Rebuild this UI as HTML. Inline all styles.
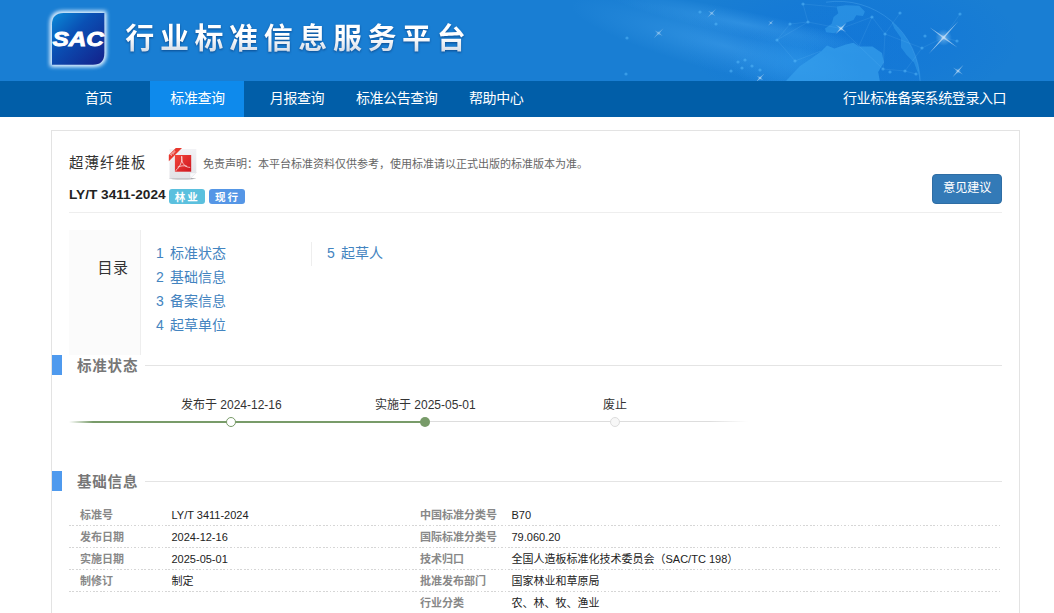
<!DOCTYPE html>
<html lang="zh-CN">
<head>
<meta charset="utf-8">
<title>行业标准信息服务平台</title>
<style>
*{box-sizing:border-box;margin:0;padding:0}
html,body{width:1054px;height:613px;overflow:hidden;background:#fff}
body{font-family:"Liberation Sans","Noto Sans CJK SC",sans-serif;font-size:12px;color:#333;position:relative}
.abs{position:absolute;white-space:nowrap}
#banner{position:absolute;left:0;top:0;width:1054px;height:81px;background:#197ed3;overflow:hidden}
#nav{position:absolute;left:0;top:81px;width:1054px;height:36px;background:#015ea8}
#nav .it{position:absolute;top:0;height:36px;line-height:35px;color:#fff;font-size:14px;letter-spacing:-.4px;text-align:center;white-space:nowrap}
#nav .act{background:#0e8aec}
#title{left:125.300px;top:18.600px;font-size:29px;line-height:40px;letter-spacing:5.600px;color:transparent;background:linear-gradient(#fff 0,#fff 45%,#cfd9e6 85%);-webkit-background-clip:text;background-clip:text;filter:drop-shadow(0 1.500px 1px rgba(0,35,90,.55));font-weight:700}
#box{position:absolute;left:51px;top:130px;width:969px;height:500px;border:1px solid #e3e3e3;background:#fff}
.lab{position:absolute;height:14.500px;line-height:14.500px;font-size:10.500px;color:#fff;border-radius:3px;text-align:center;letter-spacing:2px;text-indent:1px;font-weight:700;padding-top:.6px}
.toc{color:#4384c0;font-size:14px;line-height:20px;word-spacing:2.200px}
.sech{position:absolute;left:52px;width:10px;height:20px;background:#4f9aee}
.sect{font-size:14.500px;letter-spacing:.8px;font-weight:700;color:#777;line-height:20px}
.secl{position:absolute;height:1px;background:#e4e4e4}
.tl{font-size:12px;color:#333;line-height:16px}
.k{font-weight:700;color:#888;font-size:11px;line-height:16px}
.v{color:#222;font-size:11px;line-height:16px}
.row{position:absolute;left:69px;width:931px;height:1px;background:repeating-linear-gradient(90deg,#d6d6d6 0,#d6d6d6 1.700px,transparent 1.700px,transparent 3.430px)}
</style>
</head>
<body>
<div id="banner">
  <svg class="abs" style="left:0;top:0" width="1054" height="81" viewBox="0 0 1054 81">
    <defs>
      <radialGradient id="beam" cx="0.5" cy="0.5" r="0.5">
        <stop offset="0" stop-color="#46a4ee" stop-opacity=".5"/>
        <stop offset=".6" stop-color="#46a4ee" stop-opacity=".18"/>
        <stop offset="1" stop-color="#46a4ee" stop-opacity="0"/>
      </radialGradient>
      <radialGradient id="sg" cx="0.5" cy="0.5" r="0.5">
        <stop offset="0" stop-color="#fff" stop-opacity=".85"/>
        <stop offset=".4" stop-color="#bfe6ff" stop-opacity=".35"/>
        <stop offset="1" stop-color="#bfe6ff" stop-opacity="0"/>
      </radialGradient>
      <radialGradient id="deep" cx="0.5" cy="0.5" r="0.5"><stop offset="0" stop-color="#0c70dc" stop-opacity=".45"/><stop offset=".6" stop-color="#0c70dc" stop-opacity=".25"/><stop offset="1" stop-color="#0c70dc" stop-opacity="0"/></radialGradient>
      <radialGradient id="halo" cx="0.5" cy="0.5" r="0.5">
        <stop offset="0" stop-color="#2c97ea" stop-opacity=".55"/>
        <stop offset="1" stop-color="#2c97ea" stop-opacity="0"/>
      </radialGradient>
      <linearGradient id="gf" gradientUnits="userSpaceOnUse" x1="800" y1="0" x2="920" y2="0"><stop offset="0" stop-color="#1377d8" stop-opacity="0"/><stop offset="1" stop-color="#1377d8" stop-opacity=".4"/></linearGradient>
      <clipPath id="gc"><circle cx="838" cy="83.500" r="82.200"/></clipPath>
    </defs>
    <ellipse cx="850" cy="40" rx="170" ry="70" fill="url(#deep)"/>
    <ellipse cx="725" cy="46" rx="160" ry="27" fill="url(#beam)" transform="rotate(15 725 46)"/>
    <ellipse cx="745" cy="24" rx="140" ry="13" fill="url(#beam)" transform="rotate(12 745 24)"/>
    <ellipse cx="800" cy="60" rx="70" ry="34" fill="url(#halo)"/>
    <circle cx="838" cy="83.500" r="82.200" fill="url(#gf)"/>
    <g clip-path="url(#gc)" fill="#36a0ec">
      <path opacity=".55" d="M836.400 6.600 L845.900 5.300 L859.200 5.700 L864.900 11.400 L863 16.100 L856.300 15.200 L853.500 19.900 L845.900 22.800 L843 28.500 L834.500 33.200 L826 32.300 L825 28.500 L831.700 23.700 L833.600 17 L838.300 13.300 Z"/>
      <path opacity=".7" d="M785 82 L800 66 L810.800 58.800 L821.200 51.200 L827 45.500 L834.500 48.400 L845.900 44.600 L853.500 42.700 L859 46.500 L872.500 46.500 L882 53.100 L883.900 62.600 L878.200 72.100 L880 82 Z"/>
      <path opacity=".5" d="M891.400 20.900 A82.200 82.200 0 0 1 920.200 82 L919 76 L914 62.600 L906.600 55 L901 47.400 L901 38 L894.300 28.500 Z"/>
    </g>
    <path d="M826 2.200 A82.200 82.200 0 0 1 920.200 82" fill="none" stroke="#6fc4ff" stroke-width=".8" opacity=".3"/>
    <g stroke="#8fd4ff" stroke-width=".5" opacity=".22"><path d="M777 40 L808 22"/><path d="M808 22 L790 24"/><path d="M790 24 L777 40"/><path d="M777 40 L795 61"/><path d="M795 61 L821 51"/><path d="M808 22 L841 28.5"/><path d="M841 28.5 L872 17"/><path d="M872 17 L885 34"/><path d="M885 34 L900 13"/><path d="M885 34 L922 48"/><path d="M922 48 L905 71"/><path d="M905 71 L883 69"/><path d="M883 69 L885 34"/><path d="M922 48 L943.6 37.5"/><path d="M943.6 37.5 L960 14"/><path d="M943.6 37.5 L957 41"/><path d="M905 71 L916 74"/><path d="M872 17 L859 46"/><path d="M859 46 L883 69"/><path d="M841 28.5 L859 46"/><path d="M803 4 L808 22"/><path d="M803 4 L836 7"/></g>
    <circle cx="777" cy="40" r="1.6" fill="#5fc0ff" opacity=".45"/><circle cx="790" cy="24" r="1.6" fill="#5fc0ff" opacity=".45"/><circle cx="808" cy="22" r="1.6" fill="#5fc0ff" opacity=".45"/><circle cx="795" cy="61" r="1.6" fill="#5fc0ff" opacity=".45"/><circle cx="872" cy="17" r="1.6" fill="#5fc0ff" opacity=".45"/><circle cx="885" cy="34" r="1.6" fill="#5fc0ff" opacity=".45"/><circle cx="900" cy="13" r="1.6" fill="#5fc0ff" opacity=".45"/><circle cx="922" cy="48" r="1.6" fill="#5fc0ff" opacity=".45"/><circle cx="905" cy="71" r="1.6" fill="#5fc0ff" opacity=".45"/><circle cx="883" cy="69" r="1.6" fill="#5fc0ff" opacity=".45"/><circle cx="890" cy="72" r="1.6" fill="#5fc0ff" opacity=".45"/><circle cx="916" cy="74" r="1.6" fill="#5fc0ff" opacity=".45"/><circle cx="803" cy="4" r="1.6" fill="#5fc0ff" opacity=".45"/><circle cx="960" cy="14" r="1.6" fill="#5fc0ff" opacity=".45"/><circle cx="925" cy="36" r="1.6" fill="#5fc0ff" opacity=".45"/><circle cx="957" cy="41" r="1.6" fill="#5fc0ff" opacity=".45"/><circle cx="738" cy="62" r="1.6" fill="#5fc0ff" opacity=".45"/><circle cx="745" cy="60" r="1.6" fill="#5fc0ff" opacity=".45"/><circle cx="752" cy="66" r="1.6" fill="#5fc0ff" opacity=".45"/><circle cx="760" cy="70" r="1.6" fill="#5fc0ff" opacity=".45"/><circle cx="742" cy="68" r="1.6" fill="#5fc0ff" opacity=".45"/><circle cx="731" cy="71" r="1.6" fill="#5fc0ff" opacity=".45"/><circle cx="700" cy="12" r="1.6" fill="#5fc0ff" opacity=".45"/><circle cx="716" cy="24" r="1.6" fill="#5fc0ff" opacity=".45"/><circle cx="627" cy="38" r="1.6" fill="#5fc0ff" opacity=".45"/><circle cx="626" cy="74" r="1.6" fill="#5fc0ff" opacity=".45"/>
    <g transform="translate(943.6 37.5)" opacity="0.75"><circle r="8.4" fill="url(#sg)"/><path d="M-22 0 L0 -0.8 L22 0 L0 0.8 Z" fill="#fff" opacity=".8" transform="rotate(-48)"/><path d="M-17 0 L0 -0.8 L17 0 L0 0.8 Z" fill="#fff" opacity=".7" transform="rotate(36)"/></g>
    <g transform="translate(841 28.5)" opacity="0.75"><circle r="3.0" fill="url(#sg)"/><path d="M-8 0 L0 -0.6 L8 0 L0 0.6 Z" fill="#fff" opacity=".8" transform="rotate(-45)"/><path d="M-6 0 L0 -0.6 L6 0 L0 0.6 Z" fill="#fff" opacity=".7" transform="rotate(35)"/></g>
    <g transform="translate(958 71)" opacity="0.65"><circle r="3.0" fill="url(#sg)"/><path d="M-8 0 L0 -0.6 L8 0 L0 0.6 Z" fill="#fff" opacity=".8" transform="rotate(-48)"/><path d="M-6 0 L0 -0.6 L6 0 L0 0.6 Z" fill="#fff" opacity=".7" transform="rotate(35)"/></g>
    <g transform="translate(658.6 33.2)" opacity="0.5"><circle r="2.7" fill="url(#sg)"/><path d="M-7 0 L0 -0.55 L7 0 L0 0.55 Z" fill="#fff" opacity=".8" transform="rotate(-45)"/><path d="M-5 0 L0 -0.55 L5 0 L0 0.55 Z" fill="#fff" opacity=".7" transform="rotate(35)"/></g>
    <g transform="translate(711.7 13.3)" opacity="0.5"><circle r="2.3" fill="url(#sg)"/><path d="M-6 0 L0 -0.55 L6 0 L0 0.55 Z" fill="#fff" opacity=".8" transform="rotate(-45)"/><path d="M-4.5 0 L0 -0.55 L4.5 0 L0 0.55 Z" fill="#fff" opacity=".7" transform="rotate(35)"/></g>
    <g transform="translate(770.8 22.8)" opacity="0.5"><circle r="1.5" fill="url(#sg)"/><path d="M-4 0 L0 -0.5 L4 0 L0 0.5 Z" fill="#fff" opacity=".8" transform="rotate(-45)"/><path d="M-3 0 L0 -0.5 L3 0 L0 0.5 Z" fill="#fff" opacity=".7" transform="rotate(35)"/></g>
    <g transform="translate(760 78)" opacity="0.6"><circle r="2.3" fill="url(#sg)"/><path d="M-6 0 L0 -0.55 L6 0 L0 0.55 Z" fill="#fff" opacity=".8" transform="rotate(-45)"/><path d="M-4 0 L0 -0.55 L4 0 L0 0.55 Z" fill="#fff" opacity=".7" transform="rotate(35)"/></g>
  </svg>
</div>
<svg class="abs" style="left:46px;top:6px" width="66" height="66" viewBox="0 0 66 66">
  <defs>
    <linearGradient id="lg" x1="0" y1="0" x2="1" y2="1">
      <stop offset="0" stop-color="#0a8ad8"/>
      <stop offset=".4" stop-color="#0a50b4"/>
      <stop offset="1" stop-color="#14208a"/>
    </linearGradient>
    <filter id="glow" x="-20%" y="-20%" width="140%" height="140%"><feGaussianBlur stdDeviation="2.200"/></filter>
  </defs>
  <path d="M17 5.400 H59.900 V47 Q59.900 60.300 47 60.300 H4.500 V18 Q4.500 5.400 17 5.400 Z" fill="#f0f8ff" filter="url(#glow)"/>
  <path d="M17 5.400 H59.900 V47 Q59.900 60.300 47 60.300 H4.500 V18 Q4.500 5.400 17 5.400 Z" fill="#d8eeff" opacity=".6" filter="url(#glow)"/>
  <path d="M17.500 6.900 H58.400 V47 Q58.400 58.800 47 58.800 H6 V18.500 Q6 6.900 17.500 6.900 Z" fill="url(#lg)"/>
  <text x="32.200" y="40.400" text-anchor="middle" font-family="Liberation Sans, sans-serif" font-weight="700" font-style="italic" font-size="21" fill="#fff" stroke="#fff" stroke-width=".9" textLength="51.500" lengthAdjust="spacingAndGlyphs">SAC</text>
</svg>
<div id="title" class="abs">行业标准信息服务平台</div>

<div id="nav">
  <div class="it" style="left:51.500px;width:94px">首页</div>
  <div class="it act" style="left:150px;width:94px"><span style="position:relative;left:.5px">标准查询</span></div>
  <div class="it" style="left:250px;width:94px">月报查询</div>
  <div class="it" style="left:345.700px;width:102px">标准公告查询</div>
  <div class="it" style="left:449.200px;width:94px">帮助中心</div>
  <div class="it" style="left:843px;width:163px;text-align:left">行业标准备案系统登录入口</div>
</div>

<div id="box"></div>

<div class="abs" style="left:69px;top:152px;font-size:14.400px;letter-spacing:1.100px;line-height:22px;color:#333">超薄纤维板</div>
<svg class="abs" style="left:160px;top:140px" width="50" height="45" viewBox="0 0 50 45">
  <defs>
    <linearGradient id="pg" x1="0" y1="0" x2="0" y2="1"><stop offset="0" stop-color="#f2f2f5"/><stop offset="1" stop-color="#e2e2e6"/></linearGradient>
    <linearGradient id="rd" x1="0" y1="0" x2="1" y2="1"><stop offset="0" stop-color="#f2453a"/><stop offset="1" stop-color="#cf1620"/></linearGradient>
    <filter id="sh" x="-20%" y="-20%" width="140%" height="160%"><feGaussianBlur stdDeviation=".6"/></filter>
  </defs>
  <ellipse cx="22.500" cy="38.600" rx="13.500" ry=".9" fill="#8a8a90" opacity=".7" filter="url(#sh)"/>
  <path d="M9.500 9 H36.300 V32.500 L30.300 38.500 H9.500 Z" fill="url(#pg)"/>
  <path d="M36.300 32.500 L30.300 38.500 L29.800 33 Z" fill="#fafafc" stroke="#d4d4d8" stroke-width=".3"/>
  <rect x="14.900" y="15" width="16.300" height="16.700" fill="url(#rd)"/>
  <path d="M21.700 16.600 C22.300 19 21.800 21.500 20.600 24 C19.300 26.800 17.600 29.200 15.800 30.600 M21.700 16.600 C21.200 19.500 22.200 23 24.500 25.300 C26 26.700 28 27.400 29.800 27.400 M18 27 C20.500 25.800 23.500 25.500 26.500 26" fill="none" stroke="#fff" stroke-width=".7" stroke-linecap="round" opacity=".95"/>
  <path d="M8.800 21.300 V15 L15.800 8 H22 Z" fill="#e8382e"/>
  <text x="0" y="0" transform="translate(11.600 16.200) rotate(-45)" font-family="Liberation Sans, sans-serif" font-size="3.200" font-weight="700" fill="#fff" opacity=".85">PDF</text>
</svg>
<div class="abs" style="left:203px;top:156px;font-size:11px;line-height:16px;color:#666">免责声明：本平台标准资料仅供参考，使用标准请以正式出版的标准版本为准。</div>
<div class="abs" style="left:69px;top:185.500px;font-size:13.650px;line-height:18px;font-weight:700;color:#222">LY/T 3411-2024</div>
<div class="lab" style="left:169px;top:189px;width:35.600px;background:#5bc0de">林业</div>
<div class="lab" style="left:209.200px;top:189px;width:35.600px;background:#5596e6">现行</div>
<div class="abs" style="left:932px;top:174px;width:70px;height:30px;border-radius:4px;background:#337ab7;border:1px solid #2e6da4;color:#fff;font-size:12.400px;letter-spacing:-.4px;line-height:27px;text-align:center">意见建议</div>
<div class="abs" style="left:69px;top:212px;width:933px;height:1px;background:#eee"></div>

<div class="abs" style="left:69px;top:230px;width:72px;height:125px;background:#fbfbfb;border-right:1px solid #eee"></div>
<div class="abs" style="left:97.500px;top:256.500px;font-size:15px;letter-spacing:.6px;line-height:22px;color:#333">目录</div>
<div class="abs toc" style="left:156px;top:243px">1 标准状态</div>
<div class="abs toc" style="left:156px;top:267px">2 基础信息</div>
<div class="abs toc" style="left:156px;top:291px">3 备案信息</div>
<div class="abs toc" style="left:156px;top:315px">4 起草单位</div>
<div class="abs" style="left:311px;top:242px;width:1px;height:24px;background:#eee"></div>
<div class="abs toc" style="left:327px;top:243px">5 起草人</div>

<div class="sech" style="top:355px"></div>
<div class="abs sect" style="left:77px;top:355.700px">标准状态</div>
<div class="secl" style="left:145px;top:365px;width:857px"></div>

<div class="abs" style="left:69px;top:421px;width:356px;height:2px;background:linear-gradient(90deg,rgba(120,155,105,0) 0,#789b69 24px,#789b69 100%)"></div>
<div class="abs" style="left:425px;top:421px;width:323px;height:1px;background:linear-gradient(90deg,#ddd 0,#ddd 88%,rgba(221,221,221,0) 100%)"></div>
<div class="abs" style="left:226px;top:417px;width:10px;height:10px;border-radius:50%;background:#fff;border:1px solid #789b69"></div>
<div class="abs" style="left:420px;top:417px;width:10px;height:10px;border-radius:50%;background:#789b69"></div>
<div class="abs" style="left:610px;top:417px;width:10px;height:10px;border-radius:50%;background:#f7f7f7;border:1px solid #ddd"></div>
<div class="abs tl" style="left:181px;top:397px">发布于 2024-12-16</div>
<div class="abs tl" style="left:375px;top:397px">实施于 2025-05-01</div>
<div class="abs tl" style="left:603px;top:397px">废止</div>

<div class="sech" style="top:471px"></div>
<div class="abs sect" style="left:77px;top:471.700px">基础信息</div>
<div class="secl" style="left:145px;top:481px;width:857px"></div>

<div class="abs k" style="left:80px;top:507.0px">标准号</div><div class="abs v" style="left:171.500px;top:506.7px">LY/T 3411-2024</div>
<div class="abs k" style="left:420px;top:507.0px">中国标准分类号</div><div class="abs v" style="left:511.500px;top:506.7px">B70</div>
<div class="row" style="top:525px"></div>
<div class="abs k" style="left:80px;top:529.0px">发布日期</div><div class="abs v" style="left:171.500px;top:528.7px">2024-12-16</div>
<div class="abs k" style="left:420px;top:529.0px">国际标准分类号</div><div class="abs v" style="left:511.500px;top:528.7px">79.060.20</div>
<div class="row" style="top:547px"></div>
<div class="abs k" style="left:80px;top:551.0px">实施日期</div><div class="abs v" style="left:171.500px;top:550.7px">2025-05-01</div>
<div class="abs k" style="left:420px;top:551.0px">技术归口</div><div class="abs v" style="left:511.500px;top:550.7px">全国人造板标准化技术委员会（SAC/TC 198）</div>
<div class="row" style="top:569px"></div>
<div class="abs k" style="left:80px;top:573.0px">制修订</div><div class="abs v" style="left:171.500px;top:572.7px">制定</div>
<div class="abs k" style="left:420px;top:573.0px">批准发布部门</div><div class="abs v" style="left:511.500px;top:572.7px">国家林业和草原局</div>
<div class="row" style="top:591px"></div>
<div class="abs k" style="left:420px;top:595.0px">行业分类</div><div class="abs v" style="left:511.500px;top:594.7px">农、林、牧、渔业</div>
</body>
</html>
